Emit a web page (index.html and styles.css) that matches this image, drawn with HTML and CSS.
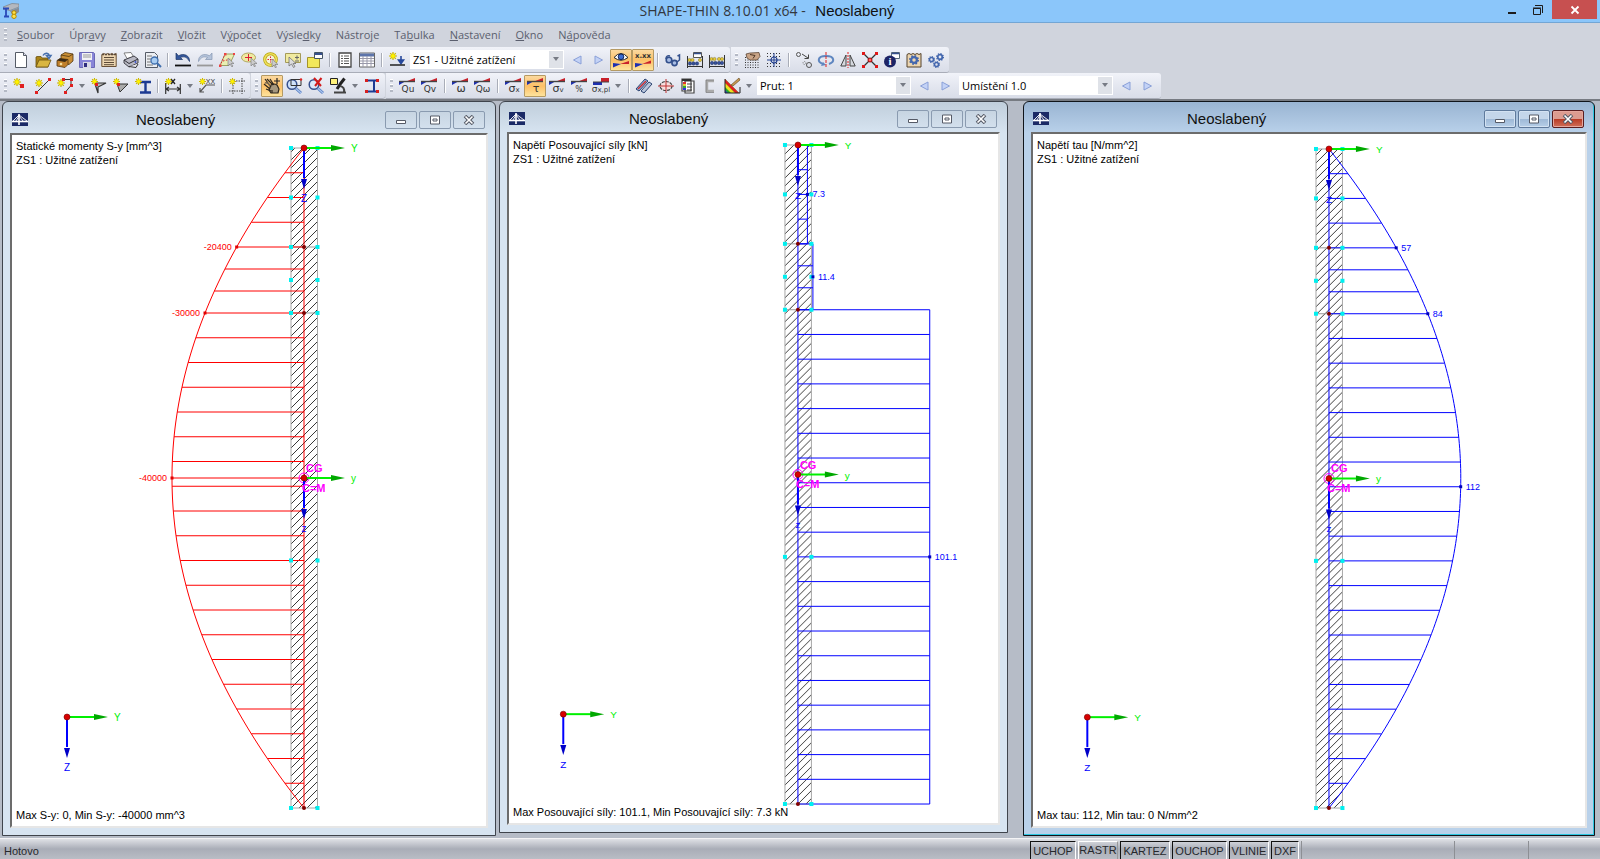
FILE: index.html
```html
<!DOCTYPE html>
<html lang="cs">
<head>
<meta charset="utf-8">
<title>SHAPE-THIN 8.10.01 x64 - Neoslabený</title>
<link rel="stylesheet" href="styles.css">
</head>
<body>
<svg class="defs" aria-hidden="true">
  <defs>
    <symbol id="spark" viewBox="0 0 8 8"><path d="M4 0v8M0 4h8M1.200 1.200l5.600 5.600M6.800 1.200l-5.600 5.600" stroke="#c9b400" stroke-width="1.200"/><circle cx="4" cy="4" r="2.200" fill="#fff200" stroke="#d8c800" stroke-width=".6"/></symbol>
    <symbol id="ramp" viewBox="0 0 16 7"><path d="M0 3v4l7-4z" fill="#1d2fb0"/><path d="M7 3.500L16 0v3.500z" fill="#c8202a"/><path d="M0 3.500h16" stroke="#444" stroke-width="1.400"/></symbol>
    <symbol id="prev" viewBox="0 0 16 16"><path d="M12 4v8L4.500 8z" fill="#c3d2f6" stroke="#8aa0d8"/></symbol>
    <symbol id="next" viewBox="0 0 16 16"><path d="M4 4v8l7.500-4z" fill="#c3d2f6" stroke="#8aa0d8"/></symbol>
    <symbol id="gear" viewBox="0 0 8 8"><circle cx="4" cy="4" r="2.300" fill="none" stroke="#4468b0" stroke-width="1.800"/><circle cx="4" cy="4" r="3.400" fill="none" stroke="#3f62a8" stroke-width="1.200" stroke-dasharray="1.300 1.370"/></symbol>
    <symbol id="bridge" viewBox="0 0 16 13"><path fill="#1b2a66" d="M0 0h16v13H0z"/><path d="M0 8.500h16" stroke="#fff" stroke-width="1.600"/><path d="M7 1v11" stroke="#fff" stroke-width="1.600"/><path d="M1 8l6-6M4 8l3-5M7 2l8 6M7 3l4 5" stroke="#fff" stroke-width=".9" fill="none"/></symbol>
  </defs>
</svg>

<header class="titlebar">
  <svg class="app-icon" viewBox="0 0 16 16"><path d="M0 4l9-3.500L16 1v3L7 7.500 0 6z" fill="#b4b8bf" stroke="#777" stroke-width=".6"/><path d="M7 8l9-3.500V9l-6 4z" fill="#888d96"/><path d="M0 5.500h6M3 6v7.500M1 13.500h5" stroke="#2a49b8" stroke-width="1.800"/><circle cx="11" cy="9.700" r="2" fill="#ffe14a" stroke="#b58a00"/><circle cx="11" cy="13.300" r="2.200" fill="#ffe14a" stroke="#b58a00"/></svg>
  <h1 class="app-title">SHAPE-THIN 8.10.01 x64 - <span class="doc-name">Neoslabený</span></h1>
  <div class="sys-buttons">
    <button class="sys" aria-label="Minimalizovat"><svg viewBox="0 0 12 12"><path d="M2 9h8" stroke="#1c1c1c" stroke-width="2"/></svg></button>
    <button class="sys" aria-label="Obnovit"><svg viewBox="0 0 12 12"><path d="M1.500 4.500h7v6h-7z" fill="none" stroke="#1c1c1c"/><path d="M1 4h8" stroke="#1c1c1c"/><path d="M3 1.500h7.500V9" fill="none" stroke="#1c1c1c"/></svg></button>
    <button class="sys sys-close" aria-label="Zavřít"><svg viewBox="0 0 12 12"><path d="M2.500 2.500l7 7M9.500 2.500l-7 7" stroke="#fff" stroke-width="1.800"/></svg></button>
  </div>
</header>

<nav class="menubar"><i class="grip"></i>
  <a href="#"><u>S</u>oubor</a><a href="#">Úpr<u>a</u>vy</a><a href="#"><u>Z</u>obrazit</a><a href="#"><u>V</u>ložit</a><a href="#">V<u>ý</u>počet</a><a href="#">Výsle<u>d</u>ky</a><a href="#">Nástro<u>j</u>e</a><a href="#">Ta<u>b</u>ulka</a><a href="#"><u>N</u>astavení</a><a href="#"><u>O</u>kno</a><a href="#">N<u>á</u>pověda</a>
</nav>

<div class="toolrow">
  <div class="toolbar">
    <i class="grip"></i>
    <button aria-label="Nový"><svg viewBox="0 0 16 16"><path d="M2.500.5h8l3 3v12h-11z" fill="#fff" stroke="#555b66"/><path d="M10.500.5v3h3" fill="#dde" stroke="#555b66"/></svg></button>
    <button aria-label="Otevřít"><svg viewBox="0 0 16 16"><path d="M1 5V15h12V6H7L6 4.500H2z" fill="#a98318" stroke="#6b5210" stroke-width=".8"/><path d="M1 15l3-7h12l-3 7z" fill="#d9b640" stroke="#6b5210" stroke-width=".8"/><path d="M8 3.500C10 0 14 1 14 4M11.500 3.500l2.500 3 2-3z" fill="none" stroke="#456fae" stroke-width="1.500"/></svg></button>
    <button aria-label="Správce bloků"><svg viewBox="0 0 16 16"><path d="M4 3l4-2.500 8 1.500v7l-4 3.500-8-1.500z" fill="#c98e35" stroke="#50360f" stroke-width=".8"/><path d="M4 3l8 1.500L16 2" fill="none" stroke="#50360f" stroke-width=".8"/><path d="M0 8.500l3-2 8 1v5l-3 3L0 14z" fill="#c07f2a" stroke="#50360f" stroke-width=".8"/><path d="M0 8.500l8 1.500 3-2.500-8-1z" fill="#3a2a15"/><circle cx="4" cy="12" r="1.300" fill="#f6dc9a"/></svg></button>
    <button aria-label="Uložit"><svg viewBox="0 0 16 16"><path d="M.5.500h14l1 1v14H.5z" fill="#8885d8" stroke="#6b68b5"/><path d="M3 1h10v7H3z" fill="#f2f2f6"/><path d="M4 3h8M4 5h8" stroke="#999"/><path d="M4 10h8v6H4z" fill="#d8d8e6"/><path d="M5 11h3v4H5z" fill="#2f2c80"/></svg></button>
    <button aria-label="Protokol"><svg viewBox="0 0 16 16"><path d="M.8 2.500l2-1 2 1 2-1 2 1 2-1 2 1 2.400-1V14.500H.8z" fill="#ecd5b0" stroke="#6a5036"/><path d="M1 2.500h14" stroke="#5c4a38" stroke-width="1.500" stroke-dasharray="2 1"/><path d="M3 5.500h10M3 8h10M3 10.500h10M3 12.700h10" stroke="#5c4a38"/></svg></button>
    <button aria-label="Tisk"><svg viewBox="0 0 16 16"><path d="M1 1l7-.5 3 5-7 1z" fill="#fff" stroke="#666" stroke-width=".8"/><path d="M1 8l10-4 4 3v4l-9 4-5-4z" fill="#b9b9c4" stroke="#33333b" stroke-width=".9"/><path d="M1 8l5 3.500L15 7" fill="none" stroke="#33333b"/><path d="M6 14.500l7 1 2-3.500" fill="#e8e8f0" stroke="#333"/><circle cx="12.500" cy="10" r=".9" fill="#3a53d0"/></svg></button>
    <button aria-label="Náhled"><svg viewBox="0 0 16 16"><path d="M.5.500h9l3 3v12H.5z" fill="#eceef2" stroke="#555b66"/><path d="M2 4h5M2 7h4M2 10h4M2 13h6" stroke="#777"/><circle cx="9.500" cy="8.500" r="3.500" fill="#a9cdf2" stroke="#406fae" stroke-width="1.300"/><path d="M12 11l4 4" stroke="#406fae" stroke-width="2"/></svg></button>
    <i class="sep"></i>
    <button aria-label="Zpět"><svg viewBox="0 0 16 16"><path d="M1 1v6.500h6.500L5.500 5.500C9 4 12 5 14.500 9.500 15 4 9.500.5 3.500 3.800z" fill="#34579c" stroke="#1e3766" stroke-width=".7"/><path d="M0 13.500h16" stroke="#111" stroke-width="1.800"/></svg></button>
    <button aria-label="Znovu"><svg viewBox="0 0 16 16"><path d="M15 1v6.500H8.500l2-2C7 4 4 5 1.500 9.500 1 4 6.500.5 12.500 3.800z" fill="#b4c3da" stroke="#8596b2" stroke-width=".7"/><path d="M0 13.500h16" stroke="#999" stroke-width="1.800"/></svg></button>
    <button aria-label="Výběr rovnoběžníkem"><svg viewBox="0 0 16 16"><path d="M1 13.500L6 2h9.500L10 13.500z" fill="#e9efb2" stroke="#9aa062"/><path d="M1 14L6 2M4 9l8-2" stroke="#d23" stroke-dasharray="1.500 1.500"/><path d="M5 1h2.500v2.500H5zM0 12.500h2.500V15H0zM14 1h2v2h-2z" fill="#e44"/><path d="M9 6v8l2-2 2 3 1-1-2-2.500h3z" fill="#ccc" stroke="#777" stroke-width=".6"/></svg></button>
    <button aria-label="Výběr elipsou"><svg viewBox="0 0 16 16"><ellipse cx="7.500" cy="5.500" rx="7" ry="4.500" fill="#efeaa0" stroke="#b0a660"/><path d="M4 5.500h7M7.500 2v7" stroke="#d23"/><path d="M10 6v8l2-2 1.500 3 1-1-1.500-2.500h3z" fill="#ccc" stroke="#777" stroke-width=".6"/></svg></button>
    <button aria-label="Výběr kružnicí"><svg viewBox="0 0 16 16"><circle cx="7.500" cy="7.500" r="5.800" fill="#f6f2d8" stroke="#b5a200" stroke-width="3"/><circle cx="7.500" cy="7.500" r="5.800" fill="none" stroke="#efe060" stroke-width="1.600"/><path d="M4.500 7.500h6M7.500 4.500v6" stroke="#d23" stroke-dasharray="1.500 1"/><path d="M9 7v8l2-2 1.500 3 1-1-1.500-2.500h3z" fill="#ccc" stroke="#777" stroke-width=".6"/></svg></button>
    <button aria-label="Výběr oknem"><svg viewBox="0 0 16 16"><path d="M.5 1.500h15v9H.5z" fill="#f0eaa0" stroke="#a49a58"/><path d="M10 5.500h4M12 3.500v4M10 9h4" stroke="#666"/><path d="M4 5v9l2.500-2 2 3.500 1.500-1-2-3h3z" fill="#ddd" stroke="#666" stroke-width=".7"/></svg></button>
    <button aria-label="Nové okno"><svg viewBox="0 0 16 16"><path d="M.5 5.500h12v10H.5z" fill="#f2e85a" stroke="#a4932a"/><path d="M7.500.5h8v6h-8z" fill="#fff" stroke="#456"/><path d="M8 2h7" stroke="#36508e" stroke-width="2"/></svg></button>
    <i class="sep"></i>
    <button aria-label="Seznam"><svg viewBox="0 0 16 16"><path d="M2 1h12v14H2z" fill="#fff" stroke="#444" stroke-width="1.300"/><path d="M4 4h2M7 4h5M4 6.500h2M7 6.500h5M4 9h2M7 9h5M4 11.500h2M7 11.500h5" stroke="#555"/></svg></button>
    <button aria-label="Tabulka"><svg viewBox="0 0 16 16"><path d="M.5 1h15v14H.5z" fill="#fff" stroke="#666"/><path d="M1 3h14" stroke="#5c74ab" stroke-width="3"/><path d="M1 6.500h14M1 9h14M1 11.500h14M4 4v11M8 4v11M12 4v11" stroke="#99a"/></svg></button>
    <i class="sep"></i>
    <button aria-label="Nový zatěžovací stav"><svg viewBox="0 0 16 16"><use href="#spark" width="8" height="8"/><path d="M12 4v6M9.500 8l2.500 3.500L14.500 8z" stroke="#26489c" stroke-width="1.600" fill="#26489c"/><path d="M1 13h15" stroke="#222" stroke-width="1.500"/></svg></button>
    <span class="combo"><select aria-label="Zatěžovací stav"><option>ZS1 - Užitné zatížení</option></select></span>
    <button aria-label="Předchozí"><svg viewBox="0 0 16 16"><use href="#prev"/></svg></button>
    <button aria-label="Další"><svg viewBox="0 0 16 16"><use href="#next"/></svg></button>
    <button class="on" aria-label="Zobrazit výsledky"><svg viewBox="0 0 16 16"><path d="M1 5.500Q8-2.500 15 5.500 8 11 1 5.500z" fill="#fff" stroke="#222"/><circle cx="8" cy="4.800" r="2.800" fill="#3c6cd0" stroke="#14245a"/><path d="M0 11v4.500L8 12z" fill="#1d2fb0"/><path d="M7 12l9-3v3z" fill="#c8202a"/></svg></button>
    <button class="on" aria-label="Zobrazit hodnoty"><svg viewBox="0 0 16 16"><text x="8" y="6" class="ico-bold">x.xx</text><path d="M0 11v4.500L8 12z" fill="#1d2fb0"/><path d="M7 12l9-3.500v3z" fill="#c8202a"/></svg></button>
    <i class="sep"></i>
    <button aria-label="Zobrazení"><svg viewBox="0 0 16 16"><circle cx="4" cy="8" r="2.800" fill="#a8bde4" stroke="#33508c" stroke-width="1.600"/><circle cx="9.500" cy="11" r="2.600" fill="#a8bde4" stroke="#33508c" stroke-width="1.600"/><path d="M1 7q0-4 4-3M12 10l2.500-2V3l-2 1" fill="none" stroke="#33508c" stroke-width="1.500"/></svg></button>
    <button aria-label="Počítadlo"><svg viewBox="0 0 16 16"><path d="M6.500.5h8v5h-8z" fill="#fff" stroke="#555"/><path d="M7 1.500h7" stroke="#36508e" stroke-width="1.500"/><path d="M.5 4v12M15.500 4v12M0 14.500h16" stroke="#333"/><g fill="#e5cb3a" stroke="#6a5a10" stroke-width=".4"><circle cx="2.500" cy="8" r="1.600"/><circle cx="5.500" cy="8" r="1.600"/><circle cx="13" cy="8" r="1.600"/></g><g fill="#35509c" stroke="#14204a" stroke-width=".4"><circle cx="3" cy="11.500" r="1.700"/><circle cx="6.500" cy="11.500" r="1.700"/><circle cx="10" cy="11.500" r="1.700"/></g></svg></button>
    <button aria-label="Výpočet"><svg viewBox="0 0 16 16"><path d="M.5 3v13M15.500 3v13M0 14.500h16" stroke="#333"/><g fill="#e5cb3a" stroke="#6a5a10" stroke-width=".4"><circle cx="2.500" cy="7" r="1.600"/><circle cx="5.500" cy="7" r="1.600"/><circle cx="10" cy="7" r="1.600"/><circle cx="13" cy="7" r="1.600"/></g><g fill="#35509c" stroke="#14204a" stroke-width=".4"><circle cx="3" cy="11" r="1.700"/><circle cx="6.500" cy="11" r="1.700"/><circle cx="10" cy="11" r="1.700"/><circle cx="13" cy="11" r="1.700"/></g></svg></button>
  </div>
  <div class="toolbar">
    <i class="grip"></i>
    <button aria-label="Rastr"><svg viewBox="0 0 16 16"><path d="M1 8h15M1 10.500h15M1 13h15M1 15.500h15M1 5.500h3" stroke="#333" stroke-dasharray="1 1.500"/><path d="M2 2l4-1 9-.5 1 4-3 3.500-7 0-3-2z" fill="#c9a487" stroke="#4c3625" stroke-width=".7"/><path d="M6 2.500l5 1-2 3" fill="none" stroke="#4c3625"/></svg></button>
    <button aria-label="Uchopení"><svg viewBox="0 0 16 16"><path d="M1 1.500h14M1 4.500h14M1 11.500h14M1 14.500h14" stroke="#333" stroke-dasharray="1 2"/><circle cx="8" cy="8" r="3" fill="none" stroke="#23408f" stroke-width="1.200"/><path d="M8 1v14M1 8h14" stroke="#23408f"/></svg></button>
    <i class="sep"></i>
    <button aria-label="Posunout"><svg viewBox="0 0 16 16"><circle cx="2.500" cy="2.500" r="2" fill="none" stroke="#555"/><circle cx="8.500" cy="11" r="1.500" fill="none" stroke="#777" stroke-dasharray="1 1"/><circle cx="13" cy="13" r="2.500" fill="none" stroke="#555"/><path d="M6 2l6 4M12.500 2.500v4h-4" fill="none" stroke="#444"/></svg></button>
    <button aria-label="Otočit"><svg viewBox="0 0 16 16"><path d="M5 12C-1 10-1 4 8 4s9 6 3 8" fill="none" stroke="#5f86c0" stroke-width="2"/><path d="M3 14l5-1-3-3z" fill="#5f86c0"/><path d="M8 0v16" stroke="#e02020" stroke-dasharray="3 1"/></svg></button>
    <button aria-label="Zrcadlit"><svg viewBox="0 0 16 16"><path d="M6 3v11H.8zM10 3v11h5.200z" fill="#d5d8de" stroke="#444"/><path d="M8 0v16" stroke="#e02020" stroke-dasharray="2 1"/></svg></button>
    <button aria-label="Rozdělit"><svg viewBox="0 0 16 16"><path d="M1.500 1.500l13 13M14.500 1.500l-13 13" stroke="#333" stroke-width="1.300"/><path d="M0 0h3v3H0zM13 0h3v3h-3zM0 13h3v3H0zM13 13h3v3h-3z" fill="#e01818"/><circle cx="8" cy="8" r="2" fill="#f66" stroke="#a00"/></svg></button>
    <button aria-label="Informace"><svg viewBox="0 0 16 16"><path d="M7.500.5h8v6h-8z" fill="#fff" stroke="#567"/><path d="M8 1.500h7" stroke="#36508e" stroke-width="1.500"/><circle cx="6" cy="9.500" r="6" fill="#1d2466"/><text x="6" y="13" class="ico-info">i</text></svg></button>
    <button aria-label="Nastavení protokolu"><svg viewBox="0 0 16 16"><path d="M1 2.500l2-1 2 1 2-1 2 1 2-1 2 1 2-1V15H1z" fill="#ecd5b0" stroke="#55432c"/><use href="#gear" x="3" y="3" width="10" height="10"/></svg></button>
    <button aria-label="Možnosti"><svg viewBox="0 0 16 16"><use href="#gear" x="0" y="4" width="7" height="7"/><use href="#gear" x="8" y="1" width="8" height="8"/><use href="#gear" x="5" y="9" width="7" height="7"/></svg></button>
  </div>
</div>

<div class="toolrow">
  <div class="toolbar">
    <i class="grip"></i>
    <button aria-label="Nový uzel"><svg viewBox="0 0 16 16"><use href="#spark" width="8" height="8"/><path d="M7 6h4v4H7z" fill="#e02020"/></svg></button>
    <button aria-label="Nová linie"><svg viewBox="0 0 16 16"><path d="M1.500 14.500l13-13" stroke="#333"/><use href="#spark" x="0" y="1" width="8" height="8"/><path d="M13 0h3v3h-3zM0 13h3v3H0z" fill="#e02020"/></svg></button>
    <button aria-label="Nový prvek"><svg viewBox="0 0 16 16"><path d="M6 1.500h8v6l-6 7" stroke="#333" fill="none"/><use href="#spark" x="0" y="1" width="8" height="8"/><path d="M5 0h3v3H5zM13 0h3v3h-3zM13 6h3v3h-3zM7 13h3v3H7z" fill="#e02020"/></svg></button>
    <button class="drop" aria-label="Více prvků"></button>
    <button aria-label="Náběh"><svg viewBox="0 0 16 16"><path d="M3 5h12L7 9v6L4 6" fill="#bbb" stroke="#333" stroke-width="1.200"/><use href="#spark" width="7" height="7" y="0"/><path d="M4 5h3v3H4z" fill="#e02020"/></svg></button>
    <button aria-label="Výplň"><svg viewBox="0 0 16 16"><path d="M4 6h11l-8 8z" fill="#aaa" stroke="#333"/><use href="#spark" width="7" height="7" y="0"/><path d="M4 5h3v3H4z" fill="#e02020"/></svg></button>
    <button aria-label="Průřez"><svg viewBox="0 0 16 16"><path d="M5 4h11M10.500 4v10M5 14.500h11" stroke="#1c3a92" stroke-width="2.400"/><use href="#spark" width="7" height="7"/></svg></button>
    <i class="sep"></i>
    <button aria-label="Kóta"><svg viewBox="0 0 16 16"><path d="M.7 5v11M15.300 6v10M1 11h14M4 9l-3 2 3 2M12 9l3 2-3 2" stroke="#333" stroke-width="1.200" fill="none"/><path d="M6 1l4 5M10 1L6 6" stroke="#222" stroke-width="1.300"/><use href="#spark" width="7" height="7"/></svg></button>
    <button class="drop" aria-label="Více kót"></button>
    <button aria-label="Komentář"><svg viewBox="0 0 16 16"><path d="M1 14l6-7h9M1 10v4h4" stroke="#555" fill="none" stroke-width="1.200"/><text x="11.500" y="5.500" class="ico-small">XX</text><use href="#spark" width="7" height="7" y="0"/></svg></button>
    <i class="sep"></i>
    <button aria-label="Pomocná linie"><svg viewBox="0 0 16 16"><path d="M4 2v14M13 0v16M2 3h14M0 13h16" stroke="#444" stroke-dasharray="1.500 1"/><use href="#spark" width="7" height="7"/></svg></button>
  </div>
  <div class="toolbar">
    <i class="grip"></i>
    <button class="on" aria-label="Posun pohledu"><svg viewBox="0 0 16 16"><path d="M7 7q3-2 6 0l2 4-1 4H7l-2-3z" fill="#a5977e" stroke="#2f281f" stroke-width="1.200"/><path d="M7 9L1 1M9 7L3 1M10 7L6 1M6 11L0 6M7 13l-5-2M8 15v-3" stroke="#2f281f" stroke-width="1.200"/><path d="M1 5q3-1 5 3" fill="none" stroke="#7b6a50" stroke-width="1.500"/><path d="M13 0v6M10 3h6" stroke="#222" stroke-width="1.200"/></svg></button>
    <button aria-label="Lupa"><svg viewBox="0 0 16 16"><circle cx="6" cy="6.500" r="4.800" fill="#cfe2fa" stroke="#36508e" stroke-width="1.500"/><path d="M5 1.500h10v6H5z" fill="none" stroke="#333"/><path d="M10 10.500l5 4.500" stroke="#5a80c4" stroke-width="3"/><path d="M10 10.500l5 4.500" stroke="#a9c4ee" stroke-width="1.200"/><circle cx="15" cy="1.500" r="1.200" fill="#d22"/></svg></button>
    <button aria-label="Zrušit lupu"><svg viewBox="0 0 16 16"><circle cx="6" cy="6.500" r="4.800" fill="#dbe8fa" stroke="#36508e" stroke-width="1.500"/><path d="M10 10.500l5 4.500" stroke="#5a80c4" stroke-width="3"/><path d="M10 10.500l5 4.500" stroke="#a9c4ee" stroke-width="1.200"/><path d="M6 0l7 8M13.500 0L7 8" stroke="#d21a1a" stroke-width="2"/></svg></button>
    <button aria-label="Pohled"><svg viewBox="0 0 16 16"><path d="M.5.500h7v6h-7z" fill="#fff27a" stroke="#222"/><path d="M14.500.5L11 5l-4 6" stroke="#222" stroke-width="3" fill="none"/><path d="M4 14.500h12M10 8q5 1 4 6" stroke="#444" stroke-width="2" fill="none"/></svg></button>
    <button class="drop" aria-label="Více pohledů"></button>
    <button aria-label="Přehled průřezu"><svg viewBox="0 0 16 16"><path d="M2 2.500h12M10 3v10M2 13.500h12" stroke="#1c3a92" stroke-width="2"/><path d="M1 1h3v3H1zM12 1h3v3h-3zM1 12h3v3H1zM12 12h3v3h-3z" fill="#d82020"/></svg></button>
  </div>
  <div class="toolbar results">
    <i class="grip"></i>
    <button aria-label="Qu"><svg viewBox="0 0 16 16"><use href="#ramp" width="16" height="7"/><text x="9" y="14" class="ico-sym">Qu</text></svg></button>
    <button aria-label="Qv"><svg viewBox="0 0 16 16"><use href="#ramp" width="16" height="7"/><text x="9" y="14" class="ico-sym">Qv</text></svg></button>
    <i class="sep"></i>
    <button aria-label="Omega"><svg viewBox="0 0 16 16"><use href="#ramp" width="16" height="7"/><text x="9" y="14" class="ico-sym big">ω</text></svg></button>
    <button aria-label="Q omega"><svg viewBox="0 0 16 16"><use href="#ramp" width="16" height="7"/><text x="9" y="14" class="ico-sym">Qω</text></svg></button>
    <i class="sep"></i>
    <button aria-label="Sigma x"><svg viewBox="0 0 16 16"><use href="#ramp" width="16" height="7"/><text x="9" y="14" class="ico-sym big">σ<tspan class="sub">x</tspan></text></svg></button>
    <button class="on" aria-label="Tau"><svg viewBox="0 0 16 16"><use href="#ramp" width="16" height="7"/><text x="9" y="14" class="ico-sym big">τ</text></svg></button>
    <button aria-label="Sigma v"><svg viewBox="0 0 16 16"><use href="#ramp" width="16" height="7"/><text x="9" y="14" class="ico-sym big">σ<tspan class="sub">v</tspan></text></svg></button>
    <button aria-label="Využití"><svg viewBox="0 0 16 16"><use href="#ramp" width="16" height="7"/><text x="8" y="14" class="ico-sym pct">%</text></svg></button>
    <button aria-label="Sigma x plastické"><svg viewBox="0 0 16 16"><path d="M8 0h8v4H8z" fill="#c8202a"/><path d="M0 4h9v3H0z" fill="#1d2fb0"/><path d="M0 4h16" stroke="#444"/><text x="8" y="14" class="ico-sym">σ<tspan class="sub">x,pl</tspan></text></svg></button>
    <button class="drop" aria-label="Více napětí"></button>
    <i class="sep"></i>
    <button aria-label="Prvky"><svg viewBox="0 0 16 16"><path d="M0 11L9 1l3 2-9 10z" fill="#8fb0de" stroke="#2c4370"/><path d="M5 13l8-9 3 2-8 9z" fill="#b9c6dc" stroke="#2c4370"/><path d="M2 11l8-8" stroke="#d03030" stroke-width="1.500"/></svg></button>
    <button aria-label="Těžiště"><svg viewBox="0 0 16 16"><ellipse cx="8" cy="8" rx="6" ry="4.500" fill="#f6dede" stroke="#444" stroke-width="1.200" stroke-dasharray="3 1"/><path d="M0 8h16M8 1v14" stroke="#c03030"/></svg></button>
    <button aria-label="Hodnoty"><svg viewBox="0 0 16 16"><path d="M2 1h9v12H2zM5 3h9v12H5z" fill="#fff" stroke="#444" stroke-width="1.200"/><path d="M2 2h9" stroke="#333" stroke-width="2"/><path d="M3 5h3" stroke="#d33" stroke-width="2"/><path d="M3 7h3" stroke="#dc3" stroke-width="2"/><path d="M3 9h3" stroke="#3a3" stroke-width="2"/><path d="M3 11h3" stroke="#33d" stroke-width="2"/><path d="M7 6h5M7 9h5M7 12h5" stroke="#444"/></svg></button>
    <button aria-label="Profil"><svg viewBox="0 0 16 16"><path d="M12 3H5v10h7" fill="none" stroke="#aaa" stroke-width="2.400"/><path d="M12 2H4v12.500h8" fill="none" stroke="#777" stroke-width=".7"/></svg></button>
    <button aria-label="Barevná škála"><svg viewBox="0 0 16 16"><path d="M1 1v14h14z" fill="#2aa82a"/><path d="M1 1l14 14h-4L1 5z" fill="#e02020"/><path d="M1 5l10 10H7L1 9z" fill="#f0e020"/><path d="M1 12l3 3H1z" fill="#2040d0"/><path d="M1 1v14h15V9" stroke="#222" fill="none"/><path d="M7 7l8-7 1 2-7 6z" fill="#c79a52" stroke="#5a4018" stroke-width=".6"/></svg></button>
    <button class="drop" aria-label="Více škál"></button>
    <span class="combo"><select aria-label="Prut"><option>Prut: 1</option></select></span>
    <button aria-label="Předchozí prut"><svg viewBox="0 0 16 16"><use href="#prev"/></svg></button>
    <button aria-label="Další prut"><svg viewBox="0 0 16 16"><use href="#next"/></svg></button>
    <span class="combo"><select aria-label="Umístění"><option>Umístění 1.0</option></select></span>
    <button aria-label="Předchozí umístění"><svg viewBox="0 0 16 16"><use href="#prev"/></svg></button>
    <button aria-label="Další umístění"><svg viewBox="0 0 16 16"><use href="#next"/></svg></button>
  </div>
</div>

<main class="mdi">
  <section class="win">
    <div class="win-title"><svg class="win-icon" viewBox="0 0 16 13"><use href="#bridge"/></svg><h2>Neoslabený</h2>
      <div class="win-buttons" data-buttons></div></div>
    <div class="canvas">
      <svg class="plot" id="plot-s" viewBox="0 0 474 691"></svg>
      <p>Statické momenty S-y [mm^3]<br>ZS1 : Užitné zatížení</p>
      <p>Max S-y: 0, Min S-y: -40000 mm^3</p>
    </div>
  </section>
  <section class="win win-short">
    <div class="win-title"><svg class="win-icon" viewBox="0 0 16 13"><use href="#bridge"/></svg><h2>Neoslabený</h2>
      <div class="win-buttons" data-buttons></div></div>
    <div class="canvas">
      <svg class="plot" id="plot-v" viewBox="0 0 489 690"></svg>
      <p>Napětí Posouvající síly [kN]<br>ZS1 : Užitné zatížení</p>
      <p>Max Posouvající síly: 101.1, Min Posouvající síly: 7.3 kN</p>
    </div>
  </section>
  <section class="win win-active">
    <div class="win-title"><svg class="win-icon" viewBox="0 0 16 13"><use href="#bridge"/></svg><h2>Neoslabený</h2>
      <div class="win-buttons" data-buttons></div></div>
    <div class="canvas">
      <svg class="plot" id="plot-t" viewBox="0 0 552 693"></svg>
      <p>Napětí tau [N/mm^2]<br>ZS1 : Užitné zatížení</p>
      <p>Max tau: 112, Min tau: 0 N/mm^2</p>
    </div>
  </section>
</main>

<footer class="status">
  <span class="status-text">Hotovo</span>
  <div class="status-right">
    <button class="mode">UCHOP</button><button class="mode off">RASTR</button><button class="mode wide">KARTEZ</button><button class="mode wider">OUCHOP</button><button class="mode mid">VLINIE</button><button class="mode small">DXF</button>
    <span class="pane"></span><span class="pane pane-small"></span><span class="pane pane-small"></span>
  </div>
</footer>
<script src="app.js"></script>
</body>
</html>
```

FILE: styles.css
```css
* { box-sizing: border-box; }
body {
  margin: 0;
  height: 100vh;
  display: flex;
  flex-direction: column;
  overflow: hidden;
  background: #d0d4dd;
  font-family: "Open Sans", "Noto Sans", sans-serif;
  font-size: 11px;
  color: #000;
}
button { border: 0; padding: 0; background: none; font: inherit; color: inherit; }
h1, h2, p { margin: 0; font-weight: normal; }
.defs { position: absolute; width: 0; height: 0; }

.titlebar {
  display: grid;
  grid-template-columns: 639fr auto 639fr;
  height: 23px;
  flex: none;
  background: #8bc6fa;
  border-bottom: 1px solid #73a6d4;
}
.app-icon { width: 16px; height: 16px; margin: 3px 0 0 3px; }
.app-title { font-size: 14px; line-height: 22px; color: #33383f; white-space: pre; margin-right: 66px; }
.doc-name { font-family: "Liberation Sans", sans-serif; font-size: 15px; color: #111; margin-left: 6px; }
.sys-buttons { display: flex; align-items: flex-start; justify-content: flex-end; padding-right: 3px; }
.sys { width: 26px; height: 19px; display: grid; place-items: center; }
.sys svg { width: 12px; height: 12px; }
.sys-close { width: 45px; background: #c75050; margin-left: 1px; }

.menubar {
  display: flex;
  align-items: center;
  gap: 15px;
  height: 24px;
  flex: none;
  color: #5b5f6e;
}
.menubar a { color: inherit; text-decoration: none; line-height: 24px; }
.menubar .grip { margin-right: -5px; }
.grip {
  width: 3px;
  height: 14px;
  margin: 0 3px 0 4px;
  flex: none;
  background: repeating-linear-gradient(#fff 0 1px, #b4b9c5 1px 3px, transparent 3px 5px);
}

.toolrow { display: flex; gap: 1px; height: 26px; flex: none; }
.toolbar {
  display: flex;
  align-items: center;
  height: 26px;
  padding-right: 2px;
  border-radius: 0 3px 3px 0;
  border-bottom: 1px solid #a9adb8;
  background: linear-gradient(#f1f3f9, #e4e7f0 50%, #d9dde8);
}
.toolbar button { width: 22px; height: 22px; display: grid; place-items: center; flex: none; }
.toolbar button svg { width: 16px; height: 16px; overflow: visible; }
.toolbar button.on { background: linear-gradient(#fbd9a0, #fdc066 50%, #fde39c); border: 1px solid #b59a63; border-radius: 1px; }
.toolbar button.drop { width: 12px; }
.drop::after, .combo::after { content: ""; border: 3px solid transparent; border-top: 4px solid #777b84; border-bottom: 0; }
.sep { width: 1px; height: 14px; margin: 0 4px 0 3px; background: #a9adb8; box-shadow: 1px 0 #fff; flex: none; }
.results .sep { margin: 0 4px; }
.combo { position: relative; display: flex; width: 154px; height: 19px; margin: 0 2px; background: #fff; flex: none; }
.combo select {
  appearance: none; width: 100%; border: 1px solid #fff; border-left-width: 0; padding: 0 16px 0 3px;
  background: linear-gradient(90deg, #fff 139px, #dfe2e8 139px) no-repeat;
  font: inherit; color: #000; border-radius: 0;
}
.combo::after { position: absolute; right: 5px; top: 7px; pointer-events: none; }

.ico-bold { font: bold 7px "DejaVu Sans", sans-serif; text-anchor: middle; fill: #333; }
.ico-info { font: bold 11px "Liberation Serif", serif; text-anchor: middle; fill: #fff; }
.ico-small { font: 7px "Liberation Sans", sans-serif; text-anchor: middle; fill: #333; }
.ico-sym { font: 9px "DejaVu Sans", sans-serif; text-anchor: middle; fill: #333; }
.ico-sym.big { font-size: 11px; }
.ico-sym.pct { font-size: 8px; }
.ico-sym .sub { font-size: 7px; }

.mdi {
  flex: 1;
  min-height: 0;
  display: grid;
  grid-template-columns: 494fr 509fr 584fr;
  column-gap: 3px;
  padding: 0 5px 2px 2px;
  border-top: 2px solid #777b82;
  background: #b6bcc7;
}
.win {
  display: flex;
  flex-direction: column;
  min-width: 0;
  padding: 0 7px 7px;
  border: 1px solid #3f444c;
  border-radius: 6px 6px 0 0;
  background: linear-gradient(#c0cedb, #d7e4f1 31px);
}
.win-short { margin-bottom: 3px; }
.win-active { margin-left: 12px; border-color: #10141a; box-shadow: inset -1px -1px #2cc6e0; background: linear-gradient(#99b4d2, #b9d1ea 31px); }
.win-title { display: flex; align-items: center; height: 31px; padding: 4px 3px 0 2px; flex: none; }
.win-short .win-title, .win-active .win-title { height: 30px; padding-top: 3px; }
.win-icon { width: 16px; height: 13px; }
.win-title h2 { font: 15px/20px "Liberation Sans", sans-serif; color: #111; margin-left: 108px; }
.win-short h2 { margin-left: 104px; }
.win-active h2 { margin-left: 138px; }
.win-buttons { display: flex; gap: 2px; margin-left: auto; }
.win-buttons button { width: 32px; height: 18px; border: 1px solid #8a9bb0; border-radius: 2px; display: grid; place-items: center; }
.win-buttons svg { width: 12px; height: 10px; }
.win-active .win-buttons button { border-color: #5f7a9c; background: linear-gradient(#c4d6ea 50%, #9db8d6 50%, #b7cfe8); box-shadow: inset 0 0 0 1px #d3e2f2; }
.win-active .win-buttons button:last-child { border-color: #5a1e20; background: linear-gradient(#dc9c90 50%, #b83a24 50%, #d0705a); box-shadow: inset 0 0 0 1px #e5a79d; }
.canvas {
  position: relative;
  flex: 1;
  min-height: 0;
  display: flex;
  flex-direction: column;
  justify-content: space-between;
  padding: 4px;
  border: 2px solid #6c6c6c;
  border-right-color: #e6e6e6;
  border-bottom-color: #e6e6e6;
  background: #fff;
  font: 11px/14px "Liberation Sans", sans-serif;
}
.plot { position: absolute; inset: 0; width: 100%; height: 100%; }
.val { font: 9px "Liberation Sans", sans-serif; }
.ax { font: 10px "Liberation Sans", sans-serif; }
.cg { font: bold 11px "Liberation Sans", sans-serif; }

.status {
  display: flex;
  justify-content: space-between;
  height: 21px;
  flex: none;
  border-top: 1px solid #f4f4f6;
  background: linear-gradient(#dfe1e6, #a9adb7 50%, #b9bdc5);
  color: #26282c;
}
.status-text { font: 11px/24px "Liberation Sans", sans-serif; padding-left: 4px; }
.status-right { display: flex; gap: 2px; padding-top: 2px; }
.mode {
  width: 46px;
  border: 1px solid #111;
  border-right-color: #fff;
  border-bottom: 0;
  font: 11px/16px "Liberation Sans", sans-serif;
  white-space: nowrap;
}
.mode.off { width: 40px; border-color: #fff #999 #fff #fff; padding-bottom: 2px; }
.mode.wide { width: 50px; }
.mode.wider { width: 55px; }
.mode.mid { width: 40px; }
.mode.small { width: 28px; }
.pane { width: 151px; border-left: 1px solid #8d8f94; }
.pane-small { width: 72px; }
```

FILE: app.js
```js
const BLUE = '#0000ff', RED = '#ff0000';

// Section is 660 units tall; result stations along its height.
const STATIONS = [];
for (let i = 0; i < 4; i++) STATIONS.push(i * 24.75);
for (let i = 0; i < 3; i++) STATIONS.push(99 + i * 22);
for (let i = 0; i <= 20; i++) STATIONS.push(165 + i * 24.75);

const parabola = s => 132 * (1 - Math.pow((s - 330) / 330, 2));
const line = (x1, y1, x2, y2, c, w = 1) =>
  `<path d="M${x1} ${y1}L${x2} ${y2}" stroke="${c}" stroke-width="${w}" fill="none"/>`;
const text = (x, y, s, c, cls, anchor = 'start') =>
  `<text x="${x}" y="${y}" fill="${c}" class="${cls}" text-anchor="${anchor}">${s}</text>`;

function triad(x, y, h, v) {
  return line(x, y, x + 30, y, '#00f000', 2) +
    `<path d="M${x + 27} ${y - 3}l14 3-14 3z" fill="#00a800"/>` +
    line(x, y, x, y + 30, BLUE, 2) +
    `<path d="M${x - 3} ${y + 31}h6l-3 10z" fill="#0000c8"/>` +
    text(x + 47, y + 4, h, '#00f000', 'ax') +
    text(x, y + 54, v, BLUE, 'ax', 'middle') +
    `<circle cx="${x}" cy="${y}" r="3" fill="#d80000" stroke="#700000" stroke-width=".6"/>`;
}

function section(id, x, y) {
  let s = `<defs><pattern id="h-${id}" width="8" height="8" patternUnits="userSpaceOnUse">
    <path d="M-1 9L9 -1M-1 1L1 -1M7 9L9 7" stroke="#222" stroke-width=".9"/></pattern></defs>`;
  s += `<rect x="${x - 13}" y="${y}" width="26.500" height="660" fill="url(#h-${id})" stroke="#a8a8a8"/>`;
  for (const d of [99, 165]) s += line(x - 13, y + d, x + 13, y + d, '#999');
  return s;
}

function marks(x, y) {
  let s = '';
  for (const d of [0, 49.5, 99, 132, 165, 412.5, 660])
    for (const dx of [-13, 13.5]) s += `<rect x="${x + dx - 2}" y="${y + d - 2}" width="4" height="4" fill="#00f0f0"/>`;
  for (const d of [99, 165, 660]) s += `<circle cx="${x}" cy="${y + d}" r="2" fill="#800000"/>`;
  s += `<circle cx="${x}" cy="${y + 330}" r="5" fill="none" stroke="#f0f"/>`;
  s += triad(x, y, 'Y', 'Z') + triad(x, y + 330, 'y', 'z');
  return s + text(x + 2, y + 324, 'CG', '#f0f', 'cg') + text(x - 2, y + 344, 'C=M', '#f0f', 'cg');
}

function curve(x, y, dir, colour, centre) {
  const at = s => x + dir * parabola(s);
  const rows = centre ? STATIONS.concat(330) : STATIONS;
  let s = rows.map(d => line(x, y + d, at(d), y + d, colour)).join('');
  let p = `M${x} ${y}`;
  for (let d = 0; d <= 660; d += 5) p += `L${at(d)} ${y + d}`;
  s += `<path d="${p}" fill="none" stroke="${colour}"/>` + line(x, y, x, y + 660, colour);
  return s;
}

function dot(x, y, c) {
  return `<rect x="${x - 1.5}" y="${y - 1.5}" width="3" height="3" fill="${c}"/>`;
}

function drawMoments(el, x, y) {
  let s = section('s', x, y) + curve(x, y, -1, RED, true);
  for (const [d, v] of [[99, '-20400'], [165, '-30000'], [330, '-40000']]) {
    const px = x - parabola(d);
    s += dot(px, y + d, '#e00000') + text(px - 5, y + d + 3, v, RED, 'val', 'end');
  }
  el.innerHTML = s + marks(x, y) + triad(55, 582, 'Y', 'Z');
}

function drawShear(el, x, y) {
  const steps = [[0, 99, 9.5, '7.3', 49.5], [99, 165, 15, '11.4', 132], [165, 660, 132, '101.1', 412.5]];
  let s = section('v', x, y), labels = '';
  for (const [a, b, w, v, m] of steps) {
    s += `<path d="M${x} ${y + a}H${x + w}V${y + b}H${x}" fill="none" stroke="${BLUE}"/>`;
    for (const d of STATIONS) if (d > a && d < b) s += line(x, y + d, x + w, y + d, BLUE);
    labels += dot(x + w, y + m, '#0000c0') + text(x + w + 5, y + m + 3, v, BLUE, 'val');
  }
  s += line(x, y, x, y + 660, BLUE);
  el.innerHTML = s + marks(x, y) + labels + triad(54, 581, 'Y', 'Z');
}

function drawTau(el, x, y) {
  let s = section('t', x, y) + curve(x, y, 1, BLUE, false);
  for (const [d, v] of [[99, '57'], [165, '84'], [338.25, '112']]) {
    const px = x + parabola(d);
    s += dot(px, y + d, '#0000c0') + text(px + 5, y + d + 3, v, BLUE, 'val');
  }
  el.innerHTML = s + marks(x, y) + triad(54, 584, 'Y', 'Z');
}

drawMoments(document.getElementById('plot-s'), 292, 13);
drawShear(document.getElementById('plot-v'), 289, 11);
drawTau(document.getElementById('plot-t'), 296, 15);

const glyphs = [
  ['Minimalizovat', '<path d="M1.500 5.500h9v3h-9z" fill="#fff" stroke="#555a66"/>'],
  ['Maximalizovat', '<path d="M1.500 1h9v8h-9z" fill="#fff" stroke="#555a66"/><path d="M4 4h4v2H4z" fill="#fff" stroke="#555a66"/>'],
  ['Zavřít', '<path d="M2 1l8 8M10 1L2 9" stroke="#555a66" stroke-width="3.600"/><path d="M2.500 1.500l7 7M9.500 1.500l-7 7" stroke="#fff" stroke-width="1.600"/>']
];
for (const box of document.querySelectorAll('[data-buttons]'))
  box.innerHTML = glyphs.map(([n, g]) => `<button aria-label="${n}"><svg viewBox="0 0 12 10">${g}</svg></button>`).join('');
```
